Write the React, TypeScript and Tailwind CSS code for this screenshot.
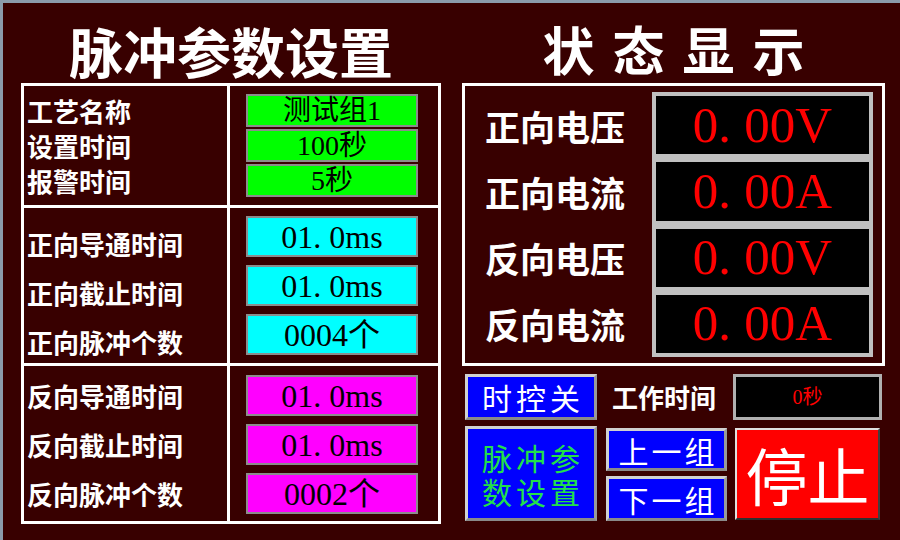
import React from 'react';

const SANS = { fontFamily: '"Noto Sans CJK SC", "Noto Sans", sans-serif' };
const SERIF = { fontFamily: '"Liberation Serif", "Noto Sans CJK SC", serif' };

// value text where the decimal point gets a wide cell, like the panel font
function Num({ text, dotW }: { text: string; dotW: number }) {
  const i = text.indexOf('.');
  if (i < 0) return <>{text}</>;
  return (
    <>
      {text.slice(0, i)}
      <span className="inline-block text-left" style={{ width: dotW }}>
        .
      </span>
      {text.slice(i + 1)}
    </>
  );
}

function Field({
  value,
  color,
  h,
  size,
}: {
  value: string;
  color: string;
  h: string;
  size: string;
}) {
  return (
    <div
      className={`w-[172px] ${h} ${color} border-2 border-[#8c8c8c] flex items-center justify-center text-black ${size} leading-none`}
      style={SERIF}
    >
      <Num text={value} dotW={16} />
    </div>
  );
}

const groupA = ['工艺名称', '设置时间', '报警时间'];
const groupAVals = ['测试组1', '100秒', '5秒'];
const groupB = ['正向导通时间', '正向截止时间', '正向脉冲个数'];
const groupBVals = ['01.0ms', '01.0ms', '0004个'];
const groupC = ['反向导通时间', '反向截止时间', '反向脉冲个数'];
const groupCVals = ['01.0ms', '01.0ms', '0002个'];

const status = [
  { label: '正向电压', value: '0.00V' },
  { label: '正向电流', value: '0.00A' },
  { label: '反向电压', value: '0.00V' },
  { label: '反向电流', value: '0.00A' },
];

const bevel =
  'border-[3px] border-t-[#d0d0d0] border-l-[#d0d0d0] border-b-[#8a8a8a] border-r-[#9a9a9a]';

export default function App() {
  return (
    <div
      className="w-[900px] h-[540px] bg-[#380000] border-t-[3px] border-l-[3px] border-[#8b9bab] flex pl-[18px] gap-[21px] overflow-hidden text-white"
      style={SANS}
    >
      {/* 左：脉冲参数设置 */}
      <div className="w-[420px] flex flex-col">
        <div className="h-[80px] pt-[21px] text-center text-[54px] leading-[54px] font-bold">
          脉冲参数设置
        </div>
        <div className="h-[441px] border-[3px] border-white flex flex-col">
          <div className="h-[122px] border-b-[3px] border-white flex">
            <div className="w-[206px] border-r-[3px] border-white pl-[3px] pt-[8px] flex flex-col gap-[2px]">
              {groupA.map((l) => (
                <div key={l} className="h-[33px] flex items-center text-[26px] font-bold leading-none">
                  {l}
                </div>
              ))}
            </div>
            <div className="flex-1 pl-[16px] pt-[8px] flex flex-col gap-[2px]">
              {groupAVals.map((v, i) => (
                <Field key={i} value={v} color="bg-[#00ff00]" h="h-[33px]" size="text-[28px]" />
              ))}
            </div>
          </div>
          <div className="h-[158px] border-b-[3px] border-white flex">
            <div className="w-[206px] border-r-[3px] border-white pl-[3px] pt-[15px] flex flex-col gap-[8px]">
              {groupB.map((l) => (
                <div key={l} className="h-[41px] flex items-center text-[26px] font-bold leading-none">
                  {l}
                </div>
              ))}
            </div>
            <div className="flex-1 pl-[16px] pt-[8px] flex flex-col gap-[8px]">
              {groupBVals.map((v, i) => (
                <Field key={i} value={v} color="bg-[#00ffff]" h="h-[41px]" size="text-[32px]" />
              ))}
            </div>
          </div>
          <div className="flex-1 flex">
            <div className="w-[206px] border-r-[3px] border-white pl-[3px] pt-[9px] flex flex-col gap-[8px]">
              {groupC.map((l) => (
                <div key={l} className="h-[41px] flex items-center text-[26px] font-bold leading-none">
                  {l}
                </div>
              ))}
            </div>
            <div className="flex-1 pl-[16px] pt-[9px] flex flex-col gap-[8px]">
              {groupCVals.map((v, i) => (
                <Field key={i} value={v} color="bg-[#ff00ff]" h="h-[41px]" size="text-[32px]" />
              ))}
            </div>
          </div>
        </div>
      </div>

      {/* 右：状态显示 */}
      <div className="w-[423px] flex flex-col">
        <div className="h-[80px] pt-[20px] pl-[18px] text-center text-[52px] leading-[52px] font-bold tracking-[18px]">
          状态显示
        </div>
        <div className="h-[283px] border-[3px] border-white flex pl-[20px] pr-[9px] py-[6px]">
          <div className="flex-1 flex flex-col py-[4px] gap-[8px]">
            {status.map((s) => (
              <div key={s.label} className="flex-1 flex items-center text-[35px] font-bold leading-none">
                {s.label}
              </div>
            ))}
          </div>
          <div className="w-[221px] bg-[#c0c0c0] p-[4px] flex flex-col gap-[8px]">
            {status.map((s) => (
              <div
                key={s.label}
                className="flex-1 bg-black flex items-center justify-center text-[#ff0000] text-[51px] leading-none"
                style={SERIF}
              >
                <Num text={s.value} dotW={26} />
              </div>
            ))}
          </div>
        </div>

        <div className="pl-[3px] mt-[8px] flex items-center h-[46px]">
          <button
            className={`w-[132px] h-[46px] bg-[#0000ff] ${bevel} flex items-center justify-center text-[30px] leading-none tracking-[4px] pl-[4px]`}
          >
            时控关
          </button>
          <div className="w-[136px] pl-[15px] text-[26px] font-bold leading-none">工作时间</div>
          <div
            className="w-[149px] h-[46px] bg-black border-[3px] border-[#b0b0b0] flex items-center justify-center text-[#ff0000] text-[20px] leading-none"
            style={SERIF}
          >
            0秒
          </div>
        </div>

        <div className="pl-[3px] mt-[6px] flex items-start">
          <button
            className={`w-[132px] h-[95px] bg-[#0000ff] ${bevel} flex flex-col items-center justify-center text-[#22e048] text-[30px] leading-[34px] tracking-[4px] pl-[4px]`}
          >
            <span>脉冲参</span>
            <span>数设置</span>
          </button>
          <div className="ml-[9px] mt-[2px] w-[121px] flex flex-col gap-[5px]">
            <button
              className={`h-[43px] bg-[#0000ff] ${bevel} flex items-center justify-center text-[30px] leading-none tracking-[3px] pl-[3px]`}
            >
              上一组
            </button>
            <button
              className={`h-[45px] bg-[#0000ff] ${bevel} flex items-center justify-center text-[30px] leading-none tracking-[3px] pl-[3px]`}
            >
              下一组
            </button>
          </div>
          <button className="ml-[8px] mt-[2px] w-[145px] h-[92px] bg-[#ff0000] border-2 border-t-[#e0e0e0] border-l-[#e0e0e0] border-b-[#303030] border-r-[#404040] flex items-center justify-center text-[62px] leading-none">
            停止
          </button>
        </div>
      </div>
    </div>
  );
}
